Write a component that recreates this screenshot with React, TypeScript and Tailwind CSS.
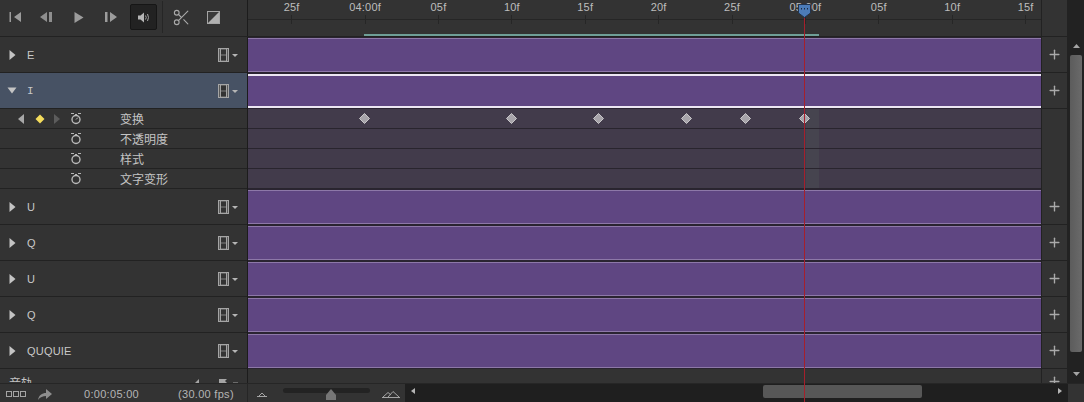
import { Plus, Scissors } from "lucide-react";

const ui = { fontFamily: '"Liberation Sans", "Noto Sans CJK SC", sans-serif' };

const rulerLabels = ["25f", "04:00f", "05f", "10f", "15f", "20f", "25f", "05:00f", "05f", "10f", "15f"];
const keyframes = [364.5, 511, 598, 686.5, 745.5, 804.5];

const Film = () => (
  <svg width="20" height="14" viewBox="0 0 20 14" className="shrink-0">
    <rect x="0.5" y="0.5" width="10" height="13" fill="#5a5a5a" stroke="#a5a5a5" />
    <path d="M2.5 1V13M8.5 1V13" stroke="#a5a5a5" fill="none" />
    <rect x="3" y="2" width="5" height="4" fill="#333333" />
    <rect x="3" y="8" width="5" height="4" fill="#333333" />
    <path d="M14 6H20L17 9Z" fill="#b5b5b5" />
  </svg>
);

const Stopwatch = ({ hand }: { hand?: boolean }) => (
  <svg width="12" height="13" viewBox="0 0 12 13">
    <path d="M1 1.5H4M8 1.5H11" stroke="#b5b5b5" />
    <path d="M5 2.5H7" stroke="#b5b5b5" />
    <circle cx="6" cy="7.5" r="4" fill="none" stroke="#b9b9b9" strokeWidth="1.4" />
    {hand && <path d="M6 7.5L8 5.5" stroke="#b9b9b9" />}
  </svg>
);

const Track = ({ name, open, selected }: { name: string; open?: boolean; selected?: boolean }) => (
  <div className="flex h-9 shrink-0">
    <div
      className={`flex w-[247px] shrink-0 items-center border-b border-[#222] pr-[9px] ${
        selected ? "bg-[#475264]" : "bg-[#333333]"
      }`}
    >
      <div className="flex w-6 justify-center">
        {open ? (
          <svg width="10" height="7" viewBox="0 0 10 7">
            <path d="M0.5 0.5H9.5L5 6.5Z" fill="#c4c4c4" />
          </svg>
        ) : (
          <svg width="7" height="10" viewBox="0 0 7 10">
            <path d="M0.5 0V10L6.5 5Z" fill="#c4c4c4" />
          </svg>
        )}
      </div>
      <span
        className={`ml-[3px] mt-[2px] flex-1 text-[11px] tracking-[0.2px] text-[#c8c8c8] ${
          name === "I" ? "font-['Liberation_Mono']" : ""
        }`}
      >
        {name}
      </span>
      <Film />
    </div>
    <div className="w-px shrink-0 bg-[#1c1c1c]" />
    <div className="flex flex-1 flex-col bg-[#2a2431] py-[1px]">
      <div
        className={`flex-1 bg-[#5f4682] ${
          selected ? "border-y-2 border-y-[#ece6f2]" : "border-y border-y-[#8d78a8]"
        }`}
      />
    </div>
    <div className="flex w-[27px] shrink-0 items-center justify-center border-x border-b border-x-[#222] border-b-[#222] bg-[#333333]">
      <Plus size={15} strokeWidth={2.2} color="#aaaaaa" />
    </div>
  </div>
);

const Param = ({ label, first }: { label: string; first?: boolean }) => (
  <div className="flex h-5 shrink-0">
    <div className="flex w-[247px] shrink-0 items-center border-b border-[#222] bg-[#333333]">
      <div className="flex w-[70px] items-center pl-[18px]">
        {first && (
          <>
            <svg width="6" height="10" viewBox="0 0 6 10">
              <path d="M6 0V10L0 5Z" fill="#a8a8a8" />
            </svg>
            <svg width="10" height="10" viewBox="0 0 10 10" className="ml-[11px]">
              <path d="M5 0.5L9.5 5L5 9.5L0.5 5Z" fill="#f4dc5c" />
            </svg>
            <svg width="6" height="10" viewBox="0 0 6 10" className="ml-[9px]">
              <path d="M0 0V10L6 5Z" fill="#5c5c5c" />
            </svg>
          </>
        )}
      </div>
      <div className="flex w-[12px] justify-center">
        <Stopwatch hand={first} />
      </div>
      <span className="ml-[38px] mt-[2px] text-[12px] leading-none text-[#c4c4c4]">{label}</span>
    </div>
    <div className="w-px shrink-0 bg-[#1c1c1c]" />
    <div className="relative flex-1 border-b border-[#29252e] bg-[#423b4b]">
      <div className="absolute inset-y-0 left-[558px] w-[13px] bg-[#46444f]" />
      {first &&
        keyframes.map((x) => (
          <svg
            key={x}
            width="11"
            height="11"
            viewBox="0 0 11 11"
            className="absolute top-[4px]"
            style={{ left: x - 248 - 5.5 }}
          >
            <path d="M5.5 0.5L10.5 5.5L5.5 10.5L0.5 5.5Z" fill="#a7a4aa" stroke="#dddddd" strokeWidth="0.8" />
          </svg>
        ))}
    </div>
    <div className="w-[27px] shrink-0 border-x border-x-[#222] bg-[#333333]" />
  </div>
);

export default function App() {
  return (
    <div className="relative flex h-[402px] w-[1084px] flex-col overflow-hidden bg-[#333333] select-none" style={ui}>
      <div className="flex h-[383px] shrink-0">
        <div className="flex min-w-0 flex-1 flex-col overflow-hidden">
          {/* Header */}
          <div className="flex h-[37px] shrink-0 border-b border-[#222]">
            <div className="flex w-[247px] shrink-0 items-center pb-[2px] pl-[9px]">
              <svg width="12" height="10" viewBox="0 0 12 10">
                <path d="M0.5 0V10H2V0ZM12 0V10L5 5Z" fill="#9c9c9c" />
              </svg>
              <svg width="12" height="10" viewBox="0 0 12 10" className="ml-[19px]">
                <path d="M7 0V10L0 5ZM9 0H12V10H9Z" fill="#8e8e8e" />
              </svg>
              <svg width="10" height="11" viewBox="0 0 10 11" className="ml-[22px]">
                <path d="M0.5 0V11L9.5 5.5Z" fill="#9c9c9c" />
              </svg>
              <svg width="12" height="10" viewBox="0 0 12 10" className="ml-[21px]">
                <path d="M0 0H2.5V10H0ZM5 0L12 5L5 10Z" fill="#9c9c9c" />
              </svg>
              <div className="ml-[13px] flex h-[26px] w-[27px] items-center justify-center rounded-[2px] border border-[#161616] bg-[#222222]">
                <svg width="12" height="11" viewBox="0 0 12 11">
                  <path d="M0 3.5H2.5L6 0.5V10.5L2.5 7.5H0Z" fill="#b5b5b5" />
                  <path d="M7.5 3.5Q9 5.5 7.5 7.5M9.5 2Q11.5 5.5 9.5 9" stroke="#a5a5a5" fill="none" />
                </svg>
              </div>
              <div className="ml-[5px] h-8 w-px bg-[#262626]" />
              <Scissors size={19} strokeWidth={1.4} color="#aaaaaa" className="ml-[9px]" />
              <svg width="13" height="13" viewBox="0 0 13 13" className="ml-[16px]">
                <rect x="0.5" y="0.5" width="12" height="12" fill="#3a3a3a" stroke="#a5a5a5" />
                <path d="M1 12L12 1V12Z" fill="#b0b0b0" />
              </svg>
            </div>
            <div className="w-px shrink-0 bg-[#1c1c1c]" />
            <div className="relative flex-1 overflow-hidden bg-[#333333]">
              <div className="absolute inset-x-0 top-[19px] h-px bg-[#262626]" />
              <div className="relative flex h-6 pl-[7px]">
                {rulerLabels.map((label, i) => (
                  <div key={i} className="flex w-[73.4px] shrink-0 flex-col items-center">
                    <span className="h-[15px] text-[11px] leading-[15px] tracking-[0.2px] text-[#bdbdbd]">{label}</span>
                    <div className="h-[9px] w-px bg-[#262626]" />
                  </div>
                ))}
              </div>
              <div className="ml-[116px] mt-[10px] h-[2px] w-[455px] bg-[#6f9f97]" />
            </div>
            <div className="w-[27px] shrink-0 border-x border-x-[#222] bg-[#333333]" />
          </div>

          {/* Tracks */}
          <Track name="E" />
          <Track name="I" open selected />
          <Param label="变换" first />
          <Param label="不透明度" />
          <Param label="样式" />
          <Param label="文字变形" />
          <Track name="U" />
          <Track name="Q" />
          <Track name="U" />
          <Track name="Q" />
          <Track name="QUQUIE" />
          <div className="flex h-[14px] shrink-0 overflow-hidden">
            <div className="flex w-[247px] shrink-0 items-start pr-[9px]">
              <span className="ml-[9px] mt-[9px] flex-1 text-[12px] leading-none text-[#c4c4c4]">音轨</span>
              <svg width="46" height="14" viewBox="0 0 46 14" className="mt-[9px]">
                <path d="M0 5H3L7 1V10H0Z" fill="#a5a5a5" />
                <path d="M27 1H35L33 3L35 5H29V10H27Z" fill="#a5a5a5" />
                <path d="M41 5H46" stroke="#a5a5a5" />
              </svg>
            </div>
            <div className="w-px shrink-0 bg-[#1c1c1c]" />
            <div className="flex-1 bg-[#333333]" />
            <div className="flex w-[27px] shrink-0 justify-center border-x border-x-[#222] pt-[5px]">
              <Plus size={15} strokeWidth={2.2} color="#aaaaaa" />
            </div>
          </div>
        </div>

        {/* Vertical scrollbar */}
        <div className="flex w-4 shrink-0 flex-col items-center bg-[#222222] pt-[37px]">
          <svg width="7" height="4" viewBox="0 0 7 4" className="mt-[7px]">
            <path d="M3.5 0L7 4H0Z" fill="#a5a5a5" />
          </svg>
          <div className="mt-[7px] h-[297px] w-3 rounded-[2px] bg-gradient-to-r from-[#5c5c5c] to-[#6a6a6a]" />
          <svg width="7" height="4" viewBox="0 0 7 4" className="mt-[20px]">
            <path d="M0 0H7L3.5 4Z" fill="#a5a5a5" />
          </svg>
        </div>
      </div>

      {/* Bottom bar */}
      <div className="flex h-[19px] shrink-0 items-center border-t border-[#262626] bg-[#333333]">
        <div className="flex w-[247px] shrink-0 items-center pt-[2px] text-[11px] leading-none text-[#b5b5b5]">
          <div className="ml-[6px] flex gap-px">
            <div className="h-[6px] w-[6px] border border-[#a5a5a5]" />
            <div className="h-[6px] w-[6px] border border-[#a5a5a5]" />
            <div className="h-[6px] w-[6px] border border-[#a5a5a5]" />
          </div>
          <svg width="14" height="11" viewBox="0 0 14 11" className="ml-[12px]">
            <path d="M0 11C1 6 4 4 8 4V0L14 5L8 10V7C5 7 2 8 0 11Z" fill="#8e8e8e" />
          </svg>
          <span className="ml-[32px] tracking-[0.3px]">0:00:05:00</span>
          <span className="ml-[39px] tracking-[0.3px]">(30.00 fps)</span>
        </div>
        <div className="h-full w-px shrink-0 bg-[#262626]" />
        <div className="flex h-full w-[157px] shrink-0 items-center pl-[9px]">
          <svg width="10" height="5" viewBox="0 0 10 5" className="mt-[3px]">
            <path d="M0 4.5H10M2 4L5 1L8 4" stroke="#a5a5a5" fill="none" />
          </svg>
          <div className="relative ml-[16px] mt-[-5px] h-[5px] w-[87px] rounded-full bg-[#232323]">
            <svg width="10" height="11" viewBox="0 0 10 11" className="absolute left-[43px] top-[1px]">
              <path d="M5 0L10 6V11H0V6Z" fill="#767676" />
            </svg>
          </div>
          <svg width="18" height="7" viewBox="0 0 18 7" className="ml-[12px] mt-[2px]">
            <path d="M0 6.5H18M1 6L6 1.5L9 4M6 6L11 0.5L17 6" stroke="#a5a5a5" fill="none" />
          </svg>
        </div>
        <div className="flex h-full flex-1 items-center justify-between bg-[#1f1f1f] px-[6px]">
          <div className="flex items-center">
            <svg width="4" height="6" viewBox="0 0 4 6" className="mt-[-4px]">
              <path d="M4 0V6L0 3Z" fill="#b5b5b5" />
            </svg>
            <div className="ml-[348px] mt-[-3px] h-[13px] w-[159px] rounded-[2px] bg-[#575757]" />
          </div>
          <svg width="4" height="6" viewBox="0 0 4 6" className="mt-[-4px]">
            <path d="M0 0V6L4 3Z" fill="#b5b5b5" />
          </svg>
        </div>
        <div className="h-full w-4 shrink-0 bg-[#333333]" />
      </div>

      {/* Playhead */}
      <div className="absolute bottom-0 left-[804px] top-[14px] w-px bg-[#a5202c]" />
      <svg width="13" height="15" viewBox="0 0 13 15" className="absolute left-[798px] top-[3px]">
        <path d="M0.5 1.5H12.5V10L6.5 14.5L0.5 10Z" fill="#4c7cb8" stroke="#22344e" />
        <path d="M3.5 5V6.5M6.5 5V6.5M9.5 5V6.5" stroke="#1a2a40" />
      </svg>
    </div>
  );
}
